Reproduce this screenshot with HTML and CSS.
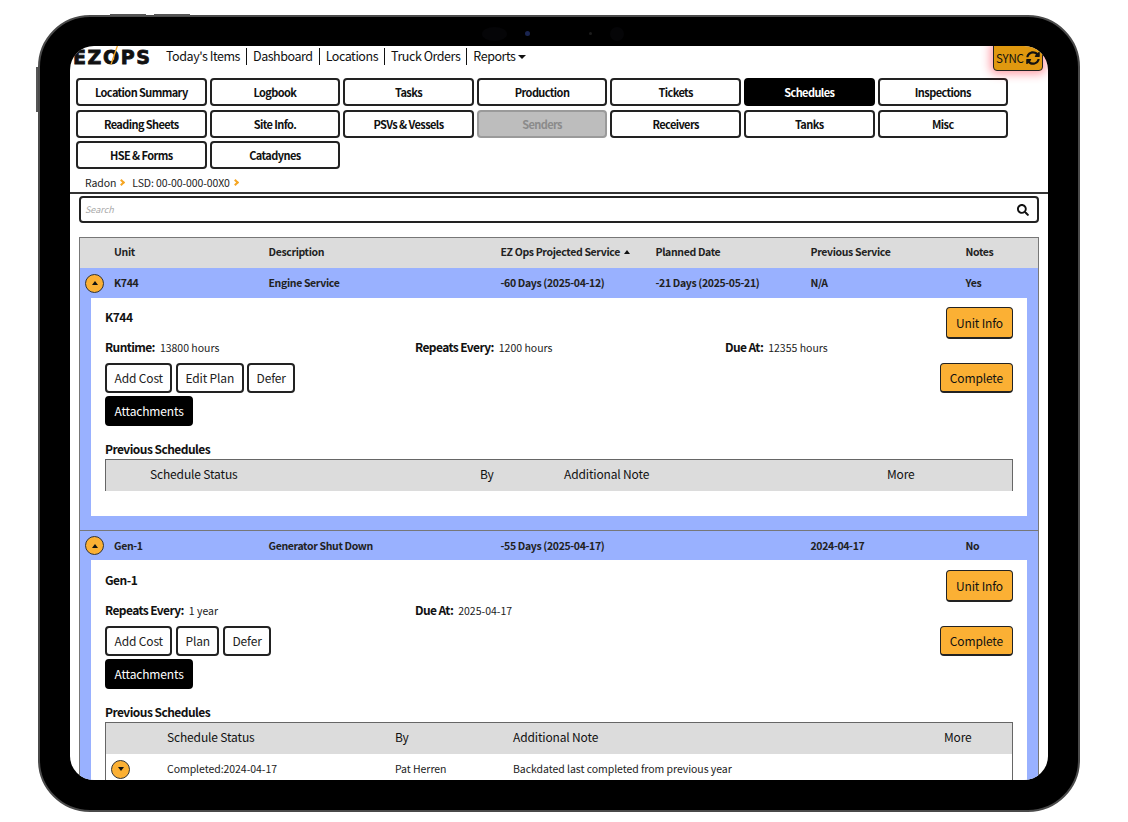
FILE: index.html
```html
<!DOCTYPE html>
<html lang="en">
<head>
<meta charset="utf-8">
<title>EZ Ops Schedules</title>
<link rel="stylesheet" href="styles.css">
</head>
<body>
<div class="device">
  <span class="hw hw-top hw-top-a"></span>
  <span class="hw hw-top hw-top-b"></span>
  <span class="hw hw-left"></span>
  <span class="cam cam-a"></span>
  <span class="cam cam-b"></span>
  <span class="cam cam-c"></span>
  <span class="cam cam-d"></span>
  <div class="screen">
    <header class="topbar">
      <div class="logo">EZOPS<svg class="logo-bolt" viewBox="0 0 10 20"><path d="M8.500 0.500 L2 19.500" stroke="#f5a623" stroke-width="1.300" fill="none"/></svg></div>
      <nav class="menu">
        <a class="menu-item">Today's Items</a>
        <a class="menu-item">Dashboard</a>
        <a class="menu-item">Locations</a>
        <a class="menu-item">Truck Orders</a>
        <a class="menu-item menu-last">Reports<i class="caret-down"></i></a>
      </nav>
    </header>
    <button class="sync">SYNC<svg class="sync-icon" viewBox="0 0 512 512"><path d="M370.72 133.28C339.458 104.008 298.888 87.962 255.848 88c-77.458.068-144.328 53.178-162.791 126.85-1.344 5.363-6.122 9.15-11.651 9.15H24.103c-7.498 0-13.194-6.807-11.807-14.176C33.933 94.924 134.813 8 256 8c66.448 0 126.791 26.136 171.315 68.685L463.03 40.97C478.149 25.851 504 36.559 504 57.941V192c0 13.255-10.745 24-24 24H345.941c-21.382 0-32.09-25.851-16.971-40.971l41.75-41.749zM32 296h134.059c21.382 0 32.09 25.851 16.971 40.971l-41.75 41.75c31.262 29.273 71.835 45.319 114.876 45.28 77.418-.07 144.315-53.144 162.787-126.849 1.344-5.363 6.122-9.15 11.651-9.15h57.304c7.498 0 13.194 6.807 11.807 14.176C478.067 417.076 377.187 504 256 504c-66.448 0-126.791-26.136-171.315-68.685L48.97 471.03C33.851 486.149 8 475.441 8 454.059V320c0-13.255 10.745-24 24-24z"/></svg></button>
    <div class="tabs">
      <a class="tab">Location Summary</a>
      <a class="tab">Logbook</a>
      <a class="tab">Tasks</a>
      <a class="tab">Production</a>
      <a class="tab">Tickets</a>
      <a class="tab tab-active">Schedules</a>
      <a class="tab">Inspections</a>
      <a class="tab">Reading Sheets</a>
      <a class="tab">Site Info.</a>
      <a class="tab">PSVs &amp; Vessels</a>
      <a class="tab tab-disabled">Senders</a>
      <a class="tab">Receivers</a>
      <a class="tab">Tanks</a>
      <a class="tab">Misc</a>
      <a class="tab">HSE &amp; Forms</a>
      <a class="tab">Catadynes</a>
    </div>
    <div class="crumbs">
      <span>Radon</span><i class="crumb-sep"></i><span>LSD: 00-00-000-00X0</span><i class="crumb-sep"></i>
    </div>
    <div class="search">
      <span class="search-ph">Search</span>
      <svg class="search-icon" viewBox="0 0 512 512"><path d="M505 442.7L405.3 343c-4.500-4.500-10.600-7-17-7H372c27.600-35.300 44-79.700 44-128C416 93.100 322.900 0 208 0S0 93.100 0 208s93.100 208 208 208c48.300 0 92.700-16.400 128-44v16.300c0 6.400 2.500 12.500 7 17l99.700 99.700c9.400 9.400 24.600 9.400 33.900 0l28.300-28.300c9.400-9.400 9.400-24.600.1-34zM208 336c-70.700 0-128-57.200-128-128 0-70.700 57.200-128 128-128 70.700 0 128 57.200 128 128 0 70.700-57.200 128-128 128z"/></svg>
    </div>
    <section class="table">
      <div class="grid-row head-row">
        <span></span><span>Unit</span><span>Description</span>
        <span>EZ Ops Projected Service<i class="caret-up head-caret"></i></span>
        <span>Planned Date</span><span>Previous Service</span><span>Notes</span>
      </div>

      <article class="group">
        <div class="grid-row unit-row">
          <span class="toggle"><i class="caret-up"></i></span><span>K744</span><span>Engine Service</span>
          <span>-60 Days (2025-04-12)</span><span>-21 Days (2025-05-21)</span><span>N/A</span><span>Yes</span>
        </div>
        <div class="panel panel-first">
          <div class="panel-top">
            <h3 class="panel-title">K744</h3>
            <button class="btn btn-amber">Unit Info</button>
          </div>
          <dl class="facts">
            <div class="fact"><dt>Runtime:</dt><dd>13800 hours</dd></div>
            <div class="fact"><dt>Repeats Every:</dt><dd>1200 hours</dd></div>
            <div class="fact"><dt>Due At:</dt><dd>12355 hours</dd></div>
          </dl>
          <div class="actions">
            <div class="action-stack">
              <div class="action-line">
                <button class="btn">Add Cost</button><button class="btn">Edit Plan</button><button class="btn">Defer</button>
              </div>
              <button class="btn btn-black">Attachments</button>
            </div>
            <button class="btn btn-amber btn-complete">Complete</button>
          </div>
          <h4 class="prev-title">Previous Schedules</h4>
          <div class="prev">
            <div class="prev-head prev-a"><span></span><span>Schedule Status</span><span>By</span><span>Additional Note</span><span>More</span></div>
          </div>
        </div>
      </article>

      <article class="group group-second">
        <div class="grid-row unit-row">
          <span class="toggle"><i class="caret-up"></i></span><span>Gen-1</span><span>Generator Shut Down</span>
          <span>-55 Days (2025-04-17)</span><span></span><span>2024-04-17</span><span>No</span>
        </div>
        <div class="panel">
          <div class="panel-top">
            <h3 class="panel-title">Gen-1</h3>
            <button class="btn btn-amber">Unit Info</button>
          </div>
          <dl class="facts">
            <div class="fact"><dt>Repeats Every:</dt><dd>1 year</dd></div>
            <div class="fact"><dt>Due At:</dt><dd>2025-04-17</dd></div>
          </dl>
          <div class="actions">
            <div class="action-stack">
              <div class="action-line">
                <button class="btn">Add Cost</button><button class="btn">Plan</button><button class="btn">Defer</button>
              </div>
              <button class="btn btn-black">Attachments</button>
            </div>
            <button class="btn btn-amber btn-complete">Complete</button>
          </div>
          <h4 class="prev-title">Previous Schedules</h4>
          <div class="prev">
            <div class="prev-head prev-b"><span></span><span>Schedule Status</span><span>By</span><span>Additional Note</span><span>More</span></div>
            <div class="prev-row prev-b">
              <span class="toggle toggle-inner"><i class="caret-down"></i></span><span>Completed:2024-04-17</span><span>Pat Herren</span><span>Backdated last completed from previous year</span><span></span>
            </div>
          </div>
        </div>
      </article>
    </section>
  </div>
</div>
</body>
</html>
```
FILE: styles.css
```css
* { box-sizing: border-box; }
html, body { margin: 0; padding: 0; background: #fff; }
body {
  width: 1128px;
  height: 822px;
  overflow: hidden;
  padding: 15px 0 0 38px;
  font-family: "Noto Sans CJK SC", "Noto Sans", "Liberation Sans", sans-serif;
  color: #111;
}
.device {
  position: relative;
  width: 1042px;
  height: 797px;
  padding: 29px 30px;
  background: #000;
  border: 2px solid #4a4a4a;
  border-radius: 52px;
}
.hw { position: absolute; background: #555; }
.hw-top { top: -3px; height: 2px; width: 36px; }
.hw-top-a { left: 70px; }
.hw-top-b { left: 114px; }
.hw-left { left: -4px; top: 50px; width: 2px; height: 45px; }
.cam { position: absolute; border-radius: 50%; background: #050507; }
.cam-a { left: 442px; top: 10px; width: 25px; height: 14px; }
.cam-b { left: 485px; top: 14px; width: 5px; height: 5px; background: #1a2550; }
.cam-c { left: 549px; top: 15px; width: 3px; height: 3px; background: #1c1c1c; }
.cam-d { left: 570px; top: 10px; width: 14px; height: 14px; }
.screen {
  position: relative;
  width: 978px;
  height: 734px;
  background: #fff;
  border-radius: 24px;
  overflow: hidden;
}

/* top bar */
.topbar { display: flex; align-items: flex-start; height: 32px; padding: 0 0 0 3px; }
.logo {
  position: relative;
  width: 93px;
  margin-top: 1px;
  font-family: "DejaVu Sans", sans-serif;
  font-weight: 700;
  font-size: 19px;
  line-height: 20px;
  letter-spacing: 1.600px;
  color: #111;
  -webkit-text-stroke: 0.8px #111;
}
.logo-bolt { position: absolute; left: 36px; top: -2px; width: 10px; height: 20px; }
.menu { display: flex; margin-top: 2px; height: 17px; }
.menu-item {
  font-size: 12.500px;
  letter-spacing: -0.450px;
  line-height: 15px;
  padding: 0 6px 0 0;
  margin-right: 6px;
  border-right: 1px solid #111;
  white-space: nowrap;
}
.menu-last { border-right: 0; }
.caret-down, .caret-up {
  display: inline-block;
  width: 0;
  height: 0;
  border-left: 4px solid transparent;
  border-right: 4px solid transparent;
}
.caret-down { border-top: 4px solid #111; margin-left: 2px; vertical-align: 2px; }
.caret-up { border-bottom: 4px solid #111; vertical-align: 2px; }
.sync {
  position: absolute;
  top: -1px;
  right: 5px;
  display: flex;
  align-items: center;
  gap: 2px;
  width: 50px;
  height: 26px;
  padding: 0 0 0 2px;
  background: #e0980f;
  border: 1px solid #222;
  border-radius: 0 0 4px 4px;
  box-shadow: 0 0 10px 3px rgba(255, 40, 60, 0.45);
  font-family: inherit;
  font-size: 11.500px;
  letter-spacing: -0.200px;
  line-height: 14px;
  color: #111;
}
.sync-icon { width: 14px; height: 14px; fill: #111; flex: none; }

/* tabs */
.tabs {
  display: grid;
  grid-template-columns: repeat(7, 130.600px);
  grid-auto-rows: 28px;
  gap: 3.500px 3px;
  padding-left: 6px;
}
.tab {
  display: flex;
  align-items: center;
  justify-content: center;
  border: 2px solid #222;
  border-radius: 4px;
  font-size: 11px;
  font-weight: 600;
  letter-spacing: -0.600px;
  line-height: 14px;
  white-space: nowrap;
}
.tab-active { background: #000; color: #fff; border-color: #000; }
.tab-disabled { background: #bdbdbd; color: #8b8b8b; border-color: #9a9a9a; }
.crumbs {
  display: flex;
  align-items: center;
  height: 25px;
  padding: 4px 0 0 15px;
  border-bottom: 2px solid #333;
  font-size: 10.500px;
  letter-spacing: -0.100px;
  line-height: 14px;
  color: #222;
}
.crumb-sep {
  width: 5px;
  height: 5px;
  margin: 0 8px 0 3px;
  border-top: 2px solid #f5a623;
  border-right: 2px solid #f5a623;
  transform: rotate(45deg);
}

/* search */
.search {
  display: flex;
  align-items: center;
  justify-content: space-between;
  height: 27px;
  margin: 2px 9px 0;
  padding: 0 8px 0 4px;
  border: 2px solid #222;
  border-radius: 4px;
}
.search-ph { font-size: 9px; font-style: italic; color: #aaa; line-height: 12px; }
.search-icon { width: 12px; height: 12px; fill: #111; }

/* table */
.table {
  margin: 14px 9px 0;
  border: 1px solid #777;
  border-bottom: 0;
}
.grid-row {
  display: grid;
  grid-template-columns: 34px 154.500px 232px 155px 155px 155px 1fr;
  align-items: center;
  font-size: 10.500px;
  font-weight: 600;
  letter-spacing: -0.350px;
  line-height: 14px;
  color: #222;
}
.head-row { height: 30px; padding-bottom: 2px; background: #dcdcdc; }
.head-caret { margin-left: 4px; border-left-width: 3.500px; border-right-width: 3.500px; }
.unit-row { height: 30px; background: #99b1ff; }
.group { background: #99b1ff; padding-bottom: 14px; }
.group-second { border-top: 1px solid #777; height: 400px; }
.group-second .unit-row { height: 29px; }
.group-second .panel { padding-top: 10px; }
.toggle {
  display: flex;
  align-items: center;
  justify-content: center;
  width: 19px;
  height: 19px;
  margin-left: 5px;
  background: #fbb034;
  border: 1px solid #333;
  border-radius: 50%;
}
.toggle .caret-up, .toggle .caret-down {
  margin: 0;
  border-left-width: 3.500px;
  border-right-width: 3.500px;
  vertical-align: baseline;
}
.panel {
  margin: 0 11px;
  padding: 9px 14px 25px;
  background: #fff;
}
.panel-first { height: 218px; }
.panel-top { display: flex; justify-content: space-between; align-items: flex-start; height: 32px; }
.panel-title { margin: 2px 0 0; font-size: 12px; font-weight: 600; letter-spacing: -0.500px; line-height: 16px; }
.facts {
  display: grid;
  grid-template-columns: repeat(3, 310px);
  margin: 0;
  height: 16px;
  align-items: center;
}
.fact { display: flex; align-items: baseline; gap: 5px; line-height: 16px; }
.fact dt { font-size: 12px; font-weight: 600; letter-spacing: -0.600px; }
.fact dd { margin: 0; font-size: 10.500px; color: #222; }
.actions { display: flex; justify-content: space-between; align-items: flex-start; margin-top: 8px; }
.action-stack { display: flex; flex-direction: column; align-items: flex-start; gap: 3px; }
.action-line { display: flex; gap: 3.500px; }
.btn {
  height: 30px;
  padding: 0 7.500px;
  background: #fff;
  border: 2px solid #222;
  border-radius: 4px;
  font-family: inherit;
  font-size: 12px;
  letter-spacing: -0.150px;
  line-height: 16px;
  color: #222;
  white-space: nowrap;
}
.btn-amber { height: 32px; padding: 0 9px; background: #fbb034; border-color: #222; border-width: 1px 1px 2px 1px; color: #111; }
.btn-complete { height: 30px; }
.btn-black { background: #000; border-color: #000; color: #fff; }
.prev-title { margin: 15px 0 0; font-size: 12px; font-weight: 600; letter-spacing: -0.550px; line-height: 16px; }
.prev { border: 1px solid #666; border-bottom: 0; margin-top: 2px; }
.prev-head { height: 31px; padding-bottom: 3px; background: #dcdcdc; font-size: 12px; letter-spacing: -0.150px; line-height: 16px; }
.prev-a, .prev-b { display: grid; align-items: center; }
.prev-a { grid-template-columns: 44px 330px 84px 323px 1fr; }
.prev-b { grid-template-columns: 61px 228px 118px 431px 1fr; }
.prev-row { height: 30px; font-size: 10.500px; letter-spacing: -0.050px; line-height: 14px; color: #222; }
.toggle-inner { margin-left: 5px; }
```
